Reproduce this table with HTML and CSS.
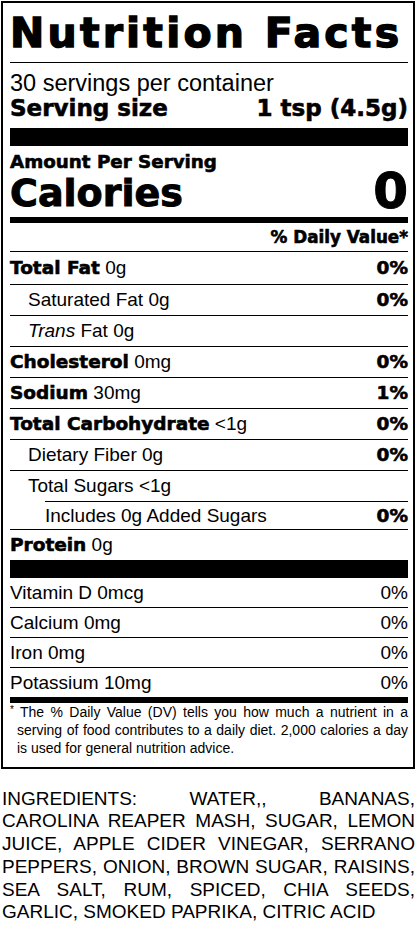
FILE: index.html
```html
<!DOCTYPE html>
<html lang="en">
<head>
    <meta charset="UTF-8">
    <meta name="viewport" content="width=device-width, initial-scale=1.0">
    <title>Nutrition Facts</title>
    <link rel="stylesheet" href="styles.css">
</head>
<body>
    <div class="label">
        <h1 class="title">Nutrition Facts</h1>
        <div class="serving">
            <p class="servings">30 servings per container</p>
            <p class="serving-size"><span>Serving size</span><span>1 tsp (4.5g)</span></p>
        </div>
        <div class="bar bar-thick"></div>
        <div class="calories">
            <p class="amount">Amount Per Serving</p>
            <p class="cal-row"><span>Calories</span><span class="cal-value">0</span></p>
        </div>
        <div class="bar bar-mid"></div>
        <p class="dv-head">% Daily Value*</p>

        <!-- nutrientes principales -->
        <div class="row row-first"><span><b>Total Fat</b> 0g</span><b>0%</b></div>
        <div class="row indent"><span>Saturated Fat 0g</span><b>0%</b></div>
        <div class="row indent"><span><i>Trans</i> Fat 0g</span></div>
        <div class="row"><span><b>Cholesterol</b> 0mg</span><b>0%</b></div>
        <div class="row"><span><b>Sodium</b> 30mg</span><b>1%</b></div>
        <div class="row"><span><b>Total Carbohydrate</b> &lt;1g</span><b>0%</b></div>
        <div class="row indent"><span>Dietary Fiber 0g</span><b>0%</b></div>
        <div class="row indent"><span>Total Sugars &lt;1g</span></div>
        <div class="row added"><span>Includes 0g Added Sugars</span><b>0%</b></div>
        <div class="row"><span><b>Protein</b> 0g</span></div>
        <div class="bar bar-thick"></div>

        <!-- vitaminas y minerales -->
        <div class="vit vit-first"><span>Vitamin D 0mcg</span><span>0%</span></div>
        <div class="vit"><span>Calcium 0mg</span><span>0%</span></div>
        <div class="vit"><span>Iron 0mg</span><span>0%</span></div>
        <div class="vit"><span>Potassium 10mg</span><span>0%</span></div>
        <div class="bar bar-mid"></div>

        <p class="note"><span class="star">*</span> The % Daily Value (DV) tells you how much a nutrient in a serving of food contributes to a daily diet. 2,000 calories a day is used for general nutrition advice.</p>
    </div>

    <p class="ingredients">INGREDIENTS: WATER,, BANANAS, CAROLINA REAPER MASH, SUGAR, LEMON JUICE, APPLE CIDER VINEGAR, SERRANO PEPPERS, ONION, BROWN SUGAR, RAISINS, SEA SALT, RUM, SPICED, CHIA SEEDS, GARLIC, SMOKED PAPRIKA, CITRIC ACID</p>
</body>
</html>
```

FILE: styles.css
```css
body {
    margin: 0;
    background-color: #ffffff;
    color: #000000;
    font-family: "Liberation Sans", Arial, sans-serif;
}
p, h1 {
    margin: 0;
}
.label {
    margin: 1px;
    border: 2px solid #000000;
    padding: 0 5px 10px 7px;
}
.title,
.serving-size,
.amount,
.cal-row,
.dv-head,
.row b {
    font-family: "DejaVu Sans", sans-serif;
    font-weight: bold;
    -webkit-text-stroke: 0.6px #000000;
}
.title {
    font-size: 41px;
    letter-spacing: 3.2px;
    line-height: 46px;
    padding: 7px 0 6px;
    border-bottom: 1px solid #000000;
    white-space: nowrap;
    -webkit-text-stroke: 1.4px #000000;
}
.serving {
    padding: 9px 0 6px;
}
.servings {
    font-size: 23.5px;
    line-height: 23px;
}
.serving-size {
    display: flex;
    justify-content: space-between;
    font-size: 23px;
    line-height: 27px;
}
.bar {
    background-color: #000000;
}
.bar-thick {
    height: 18px;
}
.bar-mid {
    height: 6px;
}
.calories {
    padding: 6px 0 3px;
}
.amount {
    font-size: 18.3px;
    line-height: 20px;
}
.cal-row {
    display: flex;
    justify-content: space-between;
    align-items: flex-start;
    font-size: 38px;
    line-height: 42px;
    -webkit-text-stroke: 1px #000000;
}
.cal-value {
    font-size: 50px;
    line-height: 38px;
}
.dv-head {
    text-align: right;
    font-size: 16.8px;
    line-height: 27px;
    padding-top: 1px;
}
.row {
    display: flex;
    justify-content: space-between;
    align-items: baseline;
    border-top: 1px solid #000000;
    height: 30px;
    font-size: 19px;
    line-height: 30px;
}
.row b {
    font-size: 18.5px;
}
.row-first {
    height: 32px;
    line-height: 32px;
}
.indent {
    padding-left: 18px;
}
.added {
    margin-left: 35px;
    height: 27px;
    line-height: 27px;
}
.vit {
    display: flex;
    justify-content: space-between;
    border-top: 1px solid #000000;
    font-size: 19px;
    line-height: 29px;
}
.vit-first {
    border-top: none;
}
.note {
    font-size: 14px;
    line-height: 18px;
    text-align: justify;
    padding-left: 7px;
    text-indent: -7px;
}
.star {
    font-size: 10px;
    vertical-align: top;
    line-height: 14px;
}
.ingredients {
    margin-top: 18.5px;
    padding: 0 1px 0 2px;
    font-size: 19px;
    line-height: 22.8px;
    text-align: justify;
}
```
